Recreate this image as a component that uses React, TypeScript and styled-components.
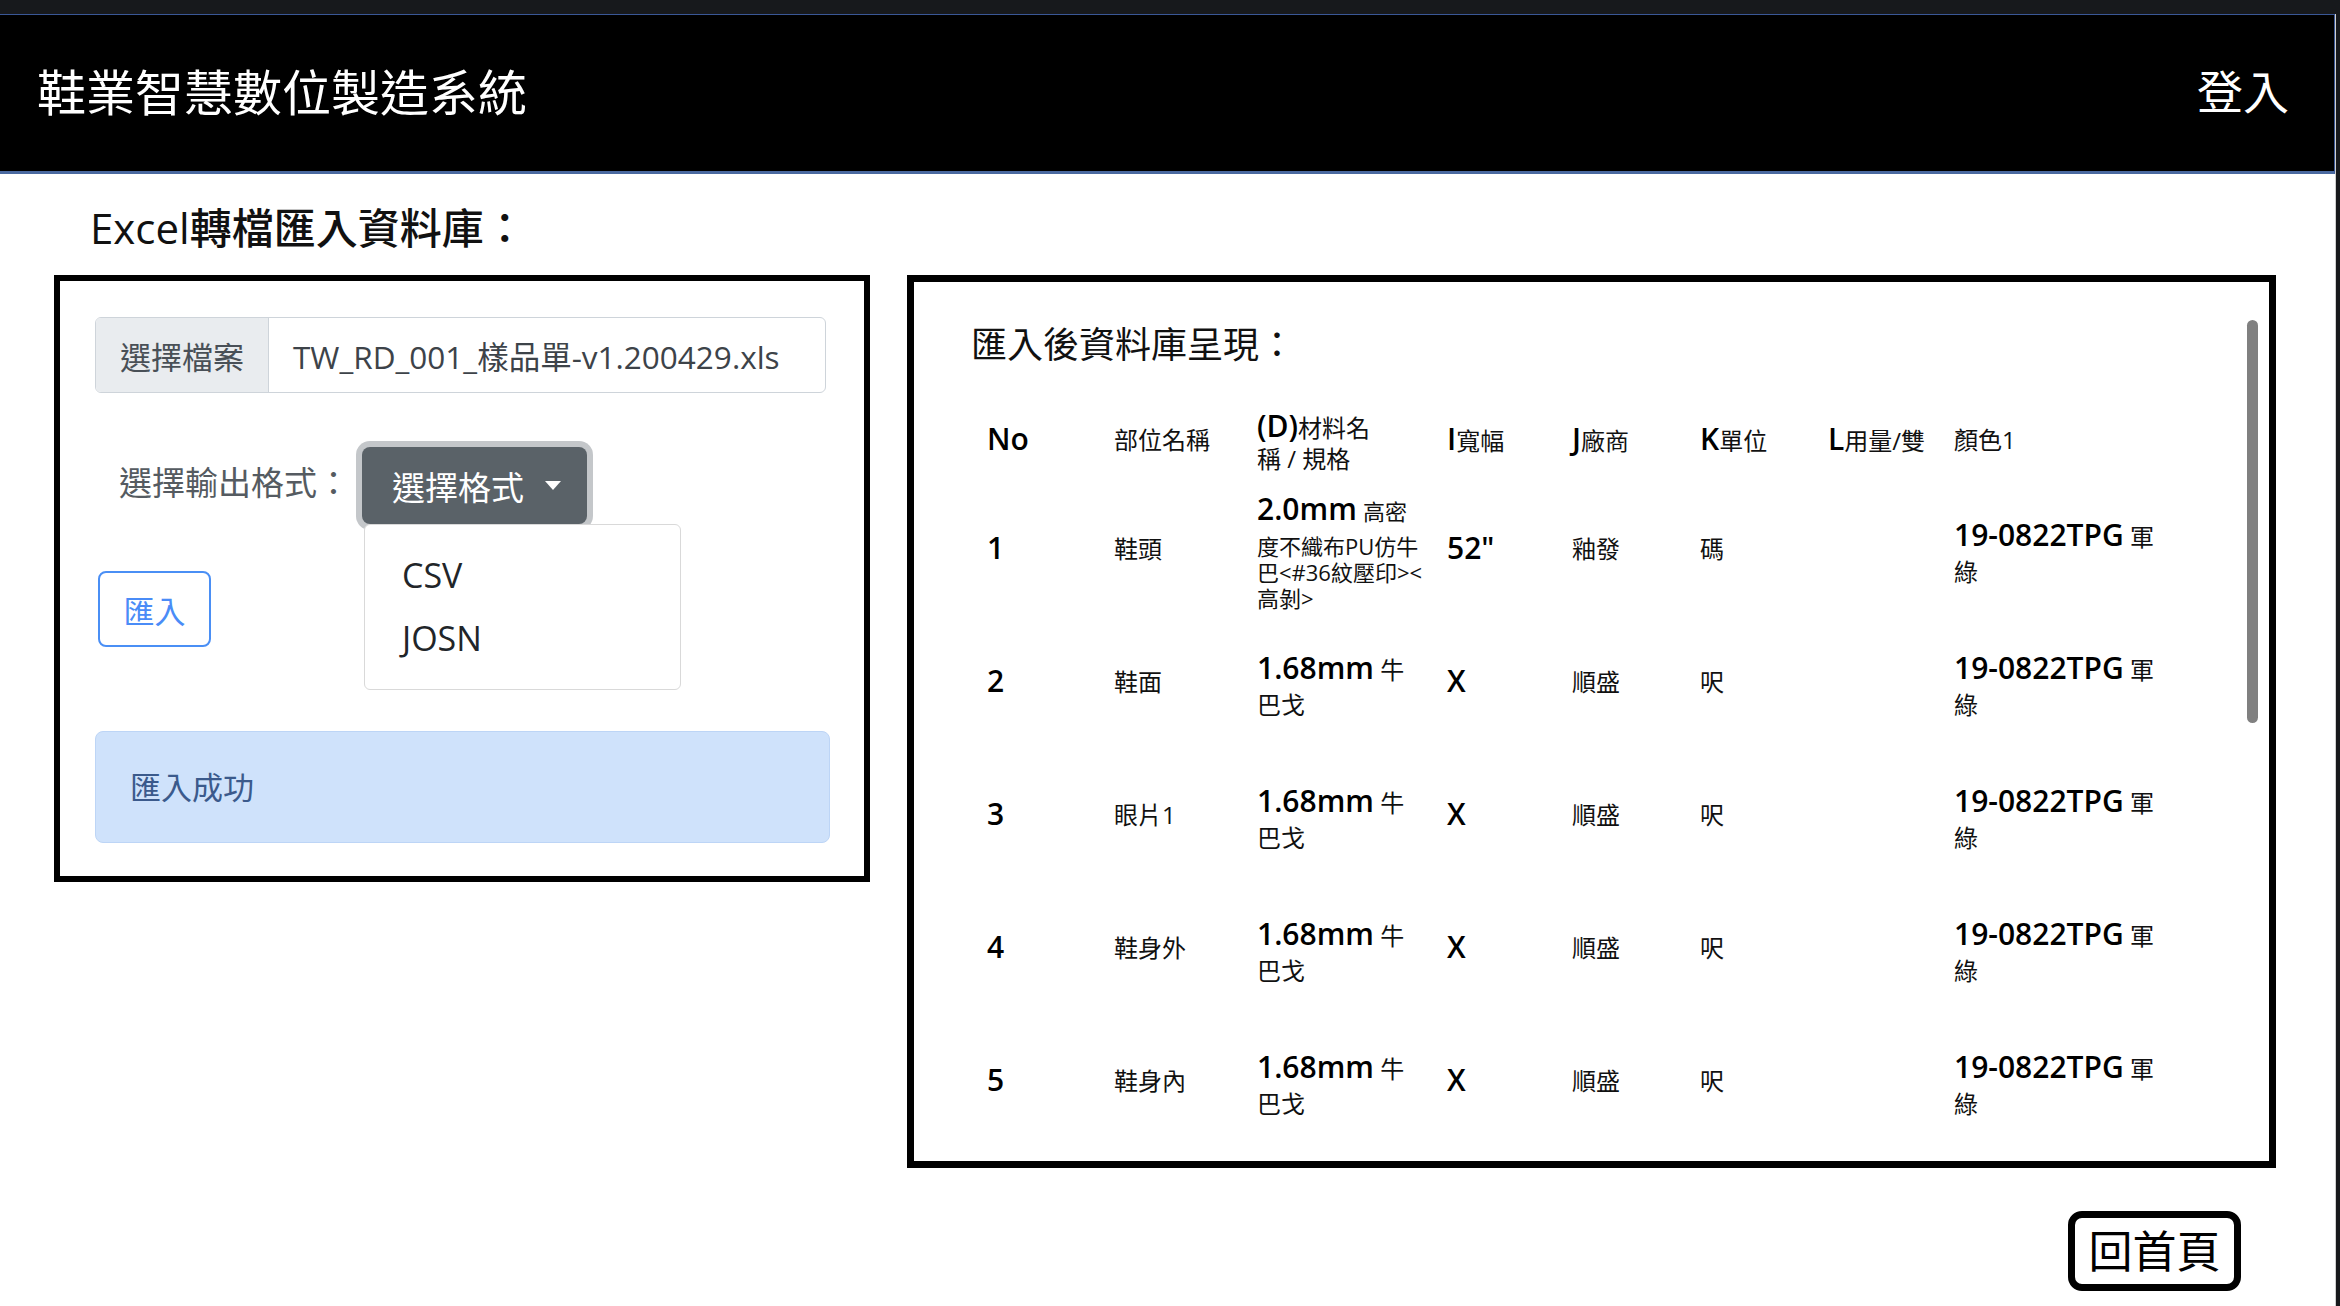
import React from "react";
import styled, { createGlobalStyle } from "styled-components";

const GlobalStyle = createGlobalStyle`
  html, body {
    margin: 0;
    padding: 0;
    background: #17191c;
  }
  body {
    font-family: "Open Sans", "Noto Sans CJK TC", sans-serif;
    color: #212529;
  }
  * { box-sizing: border-box; }
`;

const Page = styled.div`
  margin-top: 14px;
  width: 2336px;
  height: 1292px;
  background: #fff;
  border-right: 1px solid #cfcfcf;
  overflow: hidden;
`;

const Header = styled.header`
  height: 160px;
  background: #000;
  border-top: 1px solid #3a5796;
  border-right: 1px solid #3a5796;
  border-bottom: 3px solid #4a69a0;
  display: flex;
  align-items: center;
  justify-content: space-between;
  padding: 0 45px 8px 37px;
  color: #fff;
  font-family: "Noto Sans CJK TC", sans-serif;
`;

const Brand = styled.div`
  font-size: 49px;
  line-height: 1;
`;

const Login = styled.div`
  font-size: 46px;
  line-height: 1;
`;

const PageTitle = styled.h1`
  margin: 29px 0 22px 90px;
  font-size: 42px;
  line-height: 50px;
  font-weight: 500;
  color: #111;
`;

const Panels = styled.div`
  display: flex;
  align-items: flex-start;
  gap: 37px;
  padding-left: 54px;
`;

const LeftPanel = styled.section`
  width: 816px;
  height: 607px;
  border: 6px solid #000;
  padding: 36px 0 0 35px;
  display: flex;
  flex-direction: column;
  align-items: flex-start;
`;

const InputGroup = styled.div`
  display: flex;
  width: 731px;
  height: 76px;
  border: 1px solid #ced4da;
  border-radius: 6px;
  overflow: hidden;
`;

const GroupLabel = styled.div`
  width: 173px;
  flex: none;
  background: #e9ecef;
  border-right: 1px solid #ced4da;
  color: #495057;
  font-size: 31px;
  display: flex;
  align-items: center;
  justify-content: center;
`;

const FileName = styled.div`
  flex: 1;
  display: flex;
  align-items: center;
  padding-left: 24px;
  font-size: 31.5px;
  color: #3d4349;
`;

const FormatRow = styled.div`
  margin-top: 54px;
  padding-left: 24px;
  display: flex;
  align-items: center;
`;

const FormatLabel = styled.span`
  font-size: 33px;
  line-height: 1;
  padding-bottom: 6px;
  color: #555b61;
  margin-right: 12px;
`;

const DropWrap = styled.div`
  position: relative;
`;

const DropButton = styled.button`
  height: 77px;
  padding: 0 26px 0 30px;
  background: #5a6268;
  color: #fff;
  border: none;
  border-radius: 8px;
  box-shadow: 0 0 0 6px #c4c7ca;
  font-family: "Noto Sans CJK TC", sans-serif;
  font-size: 33px;
  display: flex;
  align-items: center;
  gap: 21px;
`;

const Caret = styled.span`
  width: 0;
  height: 0;
  border-left: 8.5px solid transparent;
  border-right: 8.5px solid transparent;
  border-top: 9px solid #fff;
`;

const Menu = styled.div`
  position: absolute;
  top: 100%;
  left: 2px;
  width: 317px;
  height: 166px;
  background: #fff;
  border: 1px solid #d9d9d9;
  border-radius: 6px;
  padding: 19px 0;
  z-index: 2;
`;

const MenuItem = styled.div`
  line-height: 63px;
  padding-left: 37px;
  font-size: 34px;
  color: #212529;
`;

const ImportButton = styled.button`
  margin-top: 47px;
  margin-left: 3px;
  width: 113px;
  height: 76px;
  border: 2px solid #4a8ff5;
  border-radius: 8px;
  background: #fff;
  color: #4a8cf7;
  font-family: "Noto Sans CJK TC", sans-serif;
  font-size: 31px;
  padding: 0;
`;

const Alert = styled.div`
  margin-top: 84px;
  width: 735px;
  height: 112px;
  background: #cfe2fb;
  border: 1px solid #bdd5f6;
  border-radius: 8px;
  padding: 0 0 4px 34px;
  display: flex;
  align-items: center;
  color: #3b5a8c;
  font-size: 31px;
`;

const RightPanel = styled.section`
  position: relative;
  width: 1369px;
  height: 893px;
  border: 7px solid #000;
  padding: 42px 0 0 57px;
  overflow: hidden;
`;

const PanelTitle = styled.h2`
  margin: 0 0 32px;
  font-size: 36px;
  line-height: 42px;
  font-weight: 400;
  color: #111;
`;

const Table = styled.div`
  margin-left: 16px;
  display: grid;
  grid-template-columns: 127px 143px 190px 125px 128px 128px 126px 240px;
  grid-template-rows: 84px repeat(5, 133px);
  align-items: center;
`;

const Cell = styled.div`
  font-size: 24px;
  line-height: 30px;
  color: #111;
  white-space: nowrap;
`;

const Big = styled.span`
  font-size: 30px;
  font-weight: 600;
  color: #000;
`;

const Small = styled.span<{ $size: number }>`
  font-size: ${(p) => p.$size}px;
`;

const Line = styled.div<{ $h: number }>`
  line-height: ${(p) => p.$h}px;
  white-space: nowrap;
`;

const Scrollbar = styled.div`
  position: absolute;
  top: 38px;
  right: 11px;
  width: 11px;
  height: 403px;
  background: #808080;
  border-radius: 6px;
`;

const Footer = styled.div`
  display: flex;
  justify-content: flex-end;
  padding-right: 94px;
  margin-top: 43px;
`;

const HomeButton = styled.button`
  width: 173px;
  height: 80px;
  border: 7px solid #000;
  border-radius: 14px;
  background: #fff;
  color: #000;
  font-family: "Noto Sans CJK TC", sans-serif;
  font-size: 44px;
  line-height: 1;
  padding: 0 0 5px;
  display: flex;
  align-items: center;
  justify-content: center;
`;

type Row = {
  no: string;
  part: string;
  matBig: string;
  matSize: number;
  matLines: string[];
  width: string;
  vendor: string;
  unit: string;
};

const rows: Row[] = [
  {
    no: "1",
    part: "鞋頭",
    matBig: "2.0mm",
    matSize: 22,
    matLines: ["高密", "度不織布PU仿牛", "巴<#36紋壓印><", "高剝>"],
    width: '52"',
    vendor: "釉發",
    unit: "碼",
  },
  { no: "2", part: "鞋面", matBig: "1.68mm", matSize: 24, matLines: ["牛", "巴戈"], width: "X", vendor: "順盛", unit: "呎" },
  { no: "3", part: "眼片1", matBig: "1.68mm", matSize: 24, matLines: ["牛", "巴戈"], width: "X", vendor: "順盛", unit: "呎" },
  { no: "4", part: "鞋身外", matBig: "1.68mm", matSize: 24, matLines: ["牛", "巴戈"], width: "X", vendor: "順盛", unit: "呎" },
  { no: "5", part: "鞋身內", matBig: "1.68mm", matSize: 24, matLines: ["牛", "巴戈"], width: "X", vendor: "順盛", unit: "呎" },
];

export default function App() {
  return (
    <>
      <GlobalStyle />
      <Page>
        <Header>
          <Brand>鞋業智慧數位製造系統</Brand>
          <Login>登入</Login>
        </Header>

        <PageTitle>Excel轉檔匯入資料庫：</PageTitle>

        <Panels>
          <LeftPanel>
            <InputGroup>
              <GroupLabel>選擇檔案</GroupLabel>
              <FileName>TW_RD_001_樣品單-v1.200429.xls</FileName>
            </InputGroup>

            <FormatRow>
              <FormatLabel>選擇輸出格式：</FormatLabel>
              <DropWrap>
                <DropButton>
                  選擇格式
                  <Caret />
                </DropButton>
                <Menu>
                  <MenuItem>CSV</MenuItem>
                  <MenuItem>JOSN</MenuItem>
                </Menu>
              </DropWrap>
            </FormatRow>

            <ImportButton>匯入</ImportButton>

            <Alert>匯入成功</Alert>
          </LeftPanel>

          <RightPanel>
            <PanelTitle>匯入後資料庫呈現：</PanelTitle>
            <Table>
              <Cell><Big>No</Big></Cell>
              <Cell>部位名稱</Cell>
              <Cell>
                <Line $h={36}><Big>(D)</Big>材料名</Line>
                <Line $h={26}>稱 / 規格</Line>
              </Cell>
              <Cell><Big>I</Big>寬幅</Cell>
              <Cell><Big>J</Big>廠商</Cell>
              <Cell><Big>K</Big>單位</Cell>
              <Cell><Big>L</Big>用量/雙</Cell>
              <Cell>顏色1</Cell>

              {rows.map((r) => (
                <React.Fragment key={r.no}>
                  <Cell><Big>{r.no}</Big></Cell>
                  <Cell>{r.part}</Cell>
                  <Cell>
                    <Line $h={44}>
                      <Big>{r.matBig}</Big> <Small $size={r.matSize}>{r.matLines[0]}</Small>
                    </Line>
                    {r.matLines.slice(1).map((l, i) => (
                      <Line $h={25} key={i}>
                        <Small $size={r.matSize}>{l}</Small>
                      </Line>
                    ))}
                  </Cell>
                  <Cell><Big>{r.width}</Big></Cell>
                  <Cell>{r.vendor}</Cell>
                  <Cell>{r.unit}</Cell>
                  <Cell />
                  <Cell>
                    <Line $h={44}><Big>19-0822TPG</Big> 軍</Line>
                    <Line $h={25}>綠</Line>
                  </Cell>
                </React.Fragment>
              ))}
            </Table>
            <Scrollbar />
          </RightPanel>
        </Panels>

        <Footer>
          <HomeButton>回首頁</HomeButton>
        </Footer>
      </Page>
    </>
  );
}
